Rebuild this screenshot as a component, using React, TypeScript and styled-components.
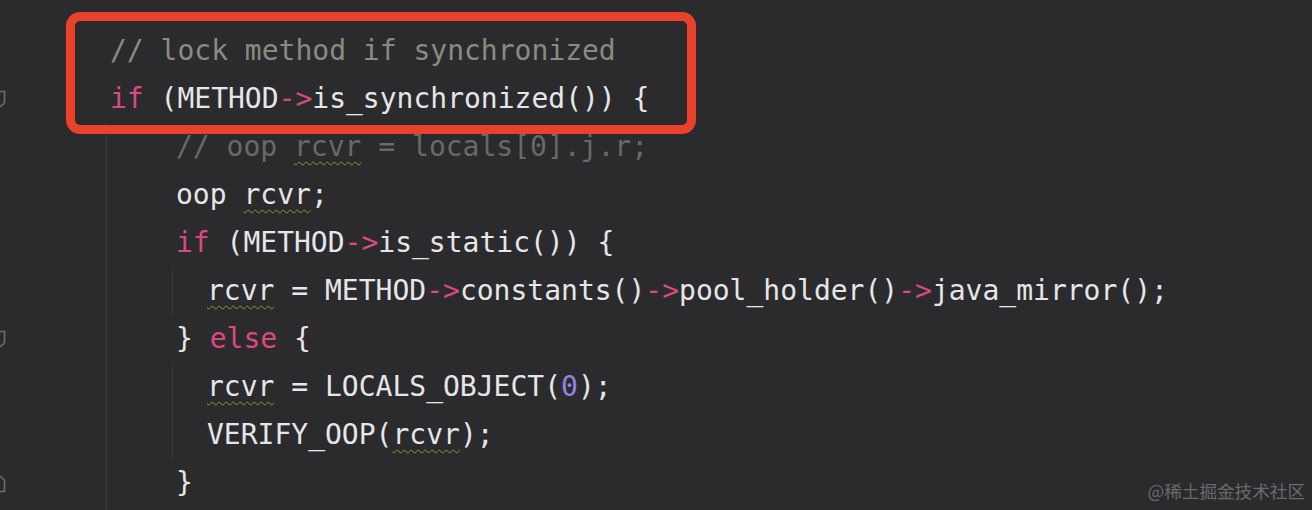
import React from "react";
import styled, { createGlobalStyle } from "styled-components";

const Global = createGlobalStyle`
  html, body { margin: 0; padding: 0; background: #2b2b2d; }
  body { overflow: hidden; }
`;

const Editor = styled.div`
  position: relative;
  display: flex;
  width: 1312px;
  height: 510px;
  overflow: hidden;
  background: #2b2b2d;
  font-family: "DejaVu Sans Mono", "Liberation Mono", monospace;
  font-size: 28px;
  line-height: 48px;
  color: #e6e6e8;
`;

const Gutter = styled.div`
  width: 110px;
  flex: none;
  padding-top: 27px;
  display: flex;
  flex-direction: column;
`;

const GutterRow = styled.div`
  height: 48px;
  display: flex;
  align-items: center;
  margin-left: -8px;
`;

const Code = styled.div`
  flex: 1;
  padding-top: 27px;
  display: flex;
  flex-direction: column;
`;

const Line = styled.div`
  height: 48px;
  white-space: pre;
`;

const Highlight = styled.div`
  position: relative;
  &::after {
    content: "";
    position: absolute;
    left: -44px;
    top: -15px;
    width: 630px;
    height: 122px;
    box-sizing: border-box;
    border: 9px solid #e8422c;
    border-radius: 14px;
    pointer-events: none;
  }
`;

const Block = styled.div<{ $pad: number; $grow?: boolean }>`
  margin-left: -4px;
  padding-left: ${(p) => p.$pad}px;
  border-left: 1px solid #3b3b3e;
  ${(p) => (p.$grow ? "flex: 1;" : "")}
`;

const Kw = styled.span`
  color: #dc4a7c;
`;

const Op = styled.span`
  color: #dc4a7c;
`;

const Num = styled.span`
  color: #9583e4;
`;

const Comment = styled.span<{ $dim?: boolean }>`
  color: ${(p) => (p.$dim ? "#696a63" : "#8a8b7f")};
`;

const Warn = styled.span`
  text-decoration: underline wavy #8b9a30;
  text-decoration-thickness: 1px;
  text-underline-offset: 5px;
`;

const Watermark = styled.div`
  position: absolute;
  right: 7px;
  bottom: 8px;
  font-family: "Noto Sans CJK SC", "Noto Sans", sans-serif;
  font-size: 17.6px;
  line-height: 22px;
  color: #6a6a6c;
`;

const FoldIcon = ({ up }: { up?: boolean }) => (
  <svg width="14" height="19" viewBox="0 0 14 19">
    {up ? (
      <path d="M1.5 17.5 V6 L7 1.5 L12.5 6 V17.5 Z" fill="none" stroke="#6c6c6e" strokeWidth="1.6" strokeLinejoin="round" />
    ) : (
      <path d="M1.5 1.5 H12.5 V13 L7 17.5 L1.5 13 Z" fill="none" stroke="#6c6c6e" strokeWidth="1.6" strokeLinejoin="round" />
    )}
  </svg>
);

const R = () => <Warn>rcvr</Warn>;

export default function App() {
  const gutter: (null | "down" | "up")[] = [null, "down", null, null, null, null, "down", null, null, "up"];
  return (
    <>
      <Global />
      <Editor>
        <Gutter>
          {gutter.map((g, i) => (
            <GutterRow key={i}>{g ? <FoldIcon up={g === "up"} /> : null}</GutterRow>
          ))}
        </Gutter>
        <Code>
          <Highlight>
            <Line>
              <Comment>// lock method if synchronized</Comment>
            </Line>
            <Line>
              <Kw>if</Kw> (METHOD<Op>-&gt;</Op>is_synchronized()) {"{"}
            </Line>
          </Highlight>
          <Block $pad={69} $grow>
            <Line>
              <Comment $dim>
                // oop <Warn>rcvr</Warn> = locals[0].j.r;
              </Comment>
            </Line>
            <Line>
              oop <R />;
            </Line>
            <Line>
              <Kw>if</Kw> (METHOD<Op>-&gt;</Op>is_static()) {"{"}
            </Line>
            <Block $pad={34}>
              <Line>
                <R /> = METHOD<Op>-&gt;</Op>constants()<Op>-&gt;</Op>pool_holder()<Op>-&gt;</Op>java_mirror();
              </Line>
            </Block>
            <Line>
              {"} "}
              <Kw>else</Kw> {"{"}
            </Line>
            <Block $pad={34}>
              <Line>
                <R /> = LOCALS_OBJECT(<Num>0</Num>);
              </Line>
              <Line>
                VERIFY_OOP(<R />);
              </Line>
            </Block>
            <Line>{"}"}</Line>
          </Block>
        </Code>
        <Watermark>@稀土掘金技术社区</Watermark>
      </Editor>
    </>
  );
}
